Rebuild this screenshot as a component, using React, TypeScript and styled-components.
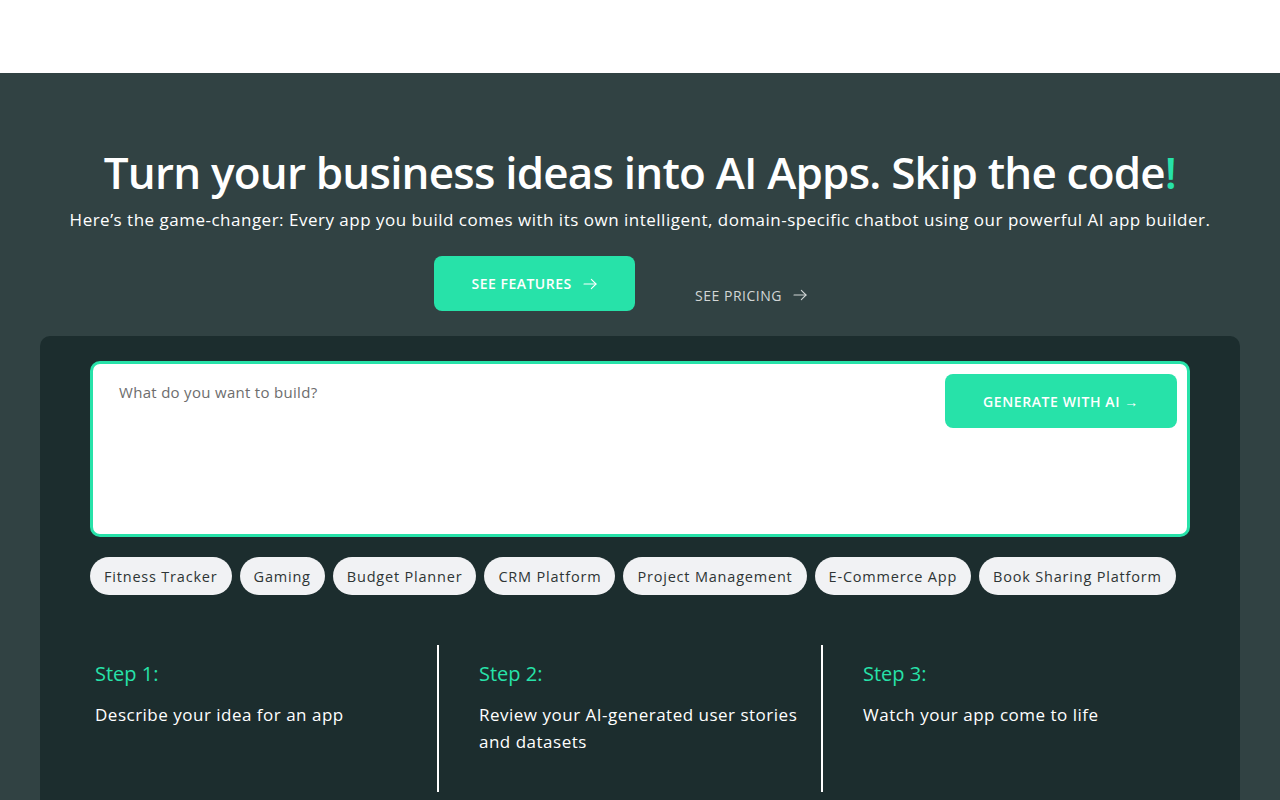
import React from "react";
import styled, { createGlobalStyle } from "styled-components";

const ACCENT = "#27e2a9";
const FONT = `"Open Sans", "Liberation Sans", sans-serif`;

const Global = createGlobalStyle`
  html, body { margin: 0; padding: 0; background: #ffffff; }
  body { font-family: ${FONT}; overflow: hidden; }
  * { box-sizing: border-box; }
`;

const Page = styled.div`
  width: 1280px;
  height: 800px;
  overflow: hidden;
  display: flex;
  flex-direction: column;
`;

const TopBar = styled.header`
  height: 73px;
  flex: none;
  background: #ffffff;
`;

const Hero = styled.section`
  flex: 1;
  background: #314243;
  display: flex;
  flex-direction: column;
  align-items: center;
  padding: 72px 40px 0;
`;

const Title = styled.h1`
  margin: 0;
  font-family: ${FONT};
  font-weight: 600;
  font-size: 44px;
  line-height: 54px;
  color: #ffffff;
  letter-spacing: -0.8px;
  text-align: center;
  white-space: nowrap;
`;

const Bang = styled.span`
  color: ${ACCENT};
`;

const Subtitle = styled.p`
  margin: 8px 0 0;
  font-size: 17px;
  line-height: 26px;
  color: #ffffff;
  letter-spacing: 0.5px;
  text-align: center;
  white-space: nowrap;
`;

const Actions = styled.div`
  display: flex;
  align-items: flex-start;
  gap: 40px;
  margin-top: 23px;
`;

const PrimaryButton = styled.button`
  width: 201px;
  height: 55px;
  border: none;
  border-radius: 8px;
  background: ${ACCENT};
  color: #ffffff;
  font-family: ${FONT};
  font-weight: 600;
  font-size: 14px;
  letter-spacing: 0.5px;
  display: flex;
  align-items: center;
  justify-content: center;
  gap: 10px;
  cursor: pointer;
`;

const LinkButton = styled.button`
  height: 55px;
  border: none;
  background: transparent;
  color: #d2d6d6;
  font-family: ${FONT};
  font-weight: 500;
  font-size: 14px;
  letter-spacing: 0.5px;
  display: flex;
  align-items: center;
  gap: 10px;
  padding: 23px 38px 0 20px;
  cursor: pointer;
`;

const Card = styled.div`
  align-self: stretch;
  margin-top: 25px;
  flex: 1;
  background: #1c2d2e;
  border-radius: 10px 10px 0 0;
  padding: 25px 50px 0;
`;

const PromptBox = styled.div`
  height: 176px;
  border: 3px solid ${ACCENT};
  border-radius: 10px;
  background: #ffffff;
  display: flex;
  align-items: flex-start;
  justify-content: space-between;
  padding: 10px 10px 0 26px;
`;

const Placeholder = styled.div`
  margin-top: 8px;
  font-size: 15px;
  line-height: 20px;
  color: #6d6d6d;
  letter-spacing: 0.3px;
`;

const GenerateButton = styled.button`
  width: 232px;
  height: 54px;
  border: none;
  border-radius: 8px;
  background: ${ACCENT};
  color: #ffffff;
  font-family: ${FONT};
  font-weight: 600;
  font-size: 14px;
  letter-spacing: 0.6px;
  cursor: pointer;
`;

const Chips = styled.div`
  display: flex;
  gap: 8px;
  margin-top: 20px;
`;

const Chip = styled.span`
  height: 38px;
  padding: 0 14px;
  border-radius: 19px;
  background: #f1f2f4;
  color: #2e3535;
  font-size: 14.5px;
  letter-spacing: 0.8px;
  display: flex;
  align-items: center;
  white-space: nowrap;
`;

const Steps = styled.div`
  display: grid;
  grid-template-columns: 384px 384px 384px;
  margin: 50px 0 0 -37px;
`;

const Step = styled.div<{ $divider?: boolean }>`
  min-height: 147px;
  padding: 16px 20px 0 40px;
  border-left: ${(p) => (p.$divider ? "2px solid #ffffff" : "2px solid transparent")};
`;

const StepTitle = styled.h3`
  margin: 0;
  font-weight: 400;
  font-size: 20px;
  line-height: 25px;
  color: ${ACCENT};
`;

const StepText = styled.p`
  margin: 15px 0 0;
  font-size: 17px;
  line-height: 27px;
  color: #ffffff;
  letter-spacing: 0.5px;
`;

const Arrow = () => (
  <svg width="16" height="16" viewBox="0 0 24 24" fill="none" stroke="currentColor" strokeWidth="1.6" strokeLinecap="round" strokeLinejoin="round">
    <path d="M3 12h18" />
    <path d="M14 5l7 7-7 7" />
  </svg>
);

const chips = [
  "Fitness Tracker",
  "Gaming",
  "Budget Planner",
  "CRM Platform",
  "Project Management",
  "E-Commerce App",
  "Book Sharing Platform",
];

const steps = [
  { title: "Step 1:", text: "Describe your idea for an app" },
  { title: "Step 2:", text: "Review your AI-generated user stories and datasets" },
  { title: "Step 3:", text: "Watch your app come to life" },
];

export default function App() {
  return (
    <>
      <Global />
      <Page>
        <TopBar />
        <Hero>
          <Title>
            Turn your business ideas into AI Apps. Skip the code<Bang>!</Bang>
          </Title>
          <Subtitle>
            Here’s the game-changer: Every app you build comes with its own intelligent, domain-specific chatbot using our powerful AI app builder.
          </Subtitle>
          <Actions>
            <PrimaryButton>
              SEE FEATURES <Arrow />
            </PrimaryButton>
            <LinkButton>
              SEE PRICING <Arrow />
            </LinkButton>
          </Actions>
          <Card>
            <PromptBox>
              <Placeholder>What do you want to build?</Placeholder>
              <GenerateButton>GENERATE WITH AI →</GenerateButton>
            </PromptBox>
            <Chips>
              {chips.map((c) => (
                <Chip key={c}>{c}</Chip>
              ))}
            </Chips>
            <Steps>
              {steps.map((s, i) => (
                <Step key={s.title} $divider={i > 0}>
                  <StepTitle>{s.title}</StepTitle>
                  <StepText>{s.text}</StepText>
                </Step>
              ))}
            </Steps>
          </Card>
        </Hero>
      </Page>
    </>
  );
}
